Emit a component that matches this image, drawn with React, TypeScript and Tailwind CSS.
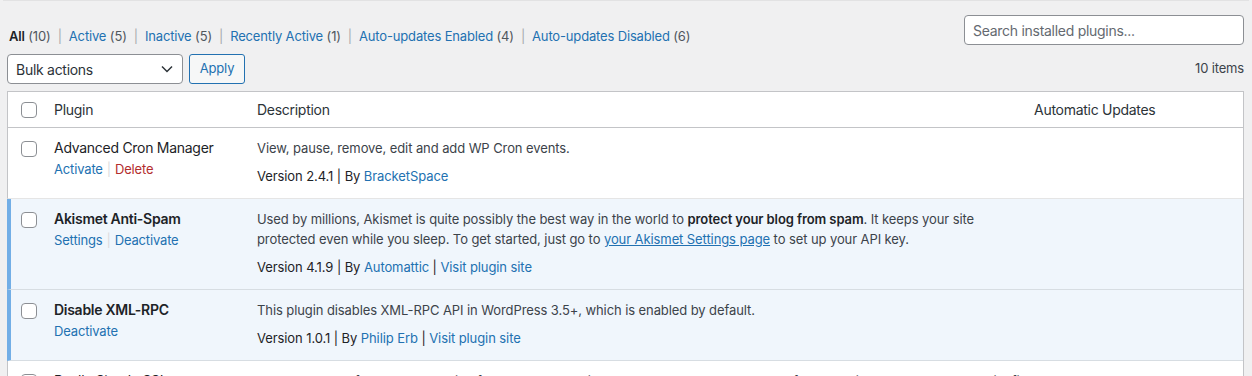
import React from "react";

const FONT = { fontFamily: "Inter, 'Noto Sans', sans-serif" };

function Checkbox() {
  return <div className="w-4 h-4 rounded-[4px] border border-[#8c8f94] bg-white" />;
}

function Sep() {
  return <span className="text-[#a7aaad] mx-[7px]">|</span>;
}

type Row = {
  name: string;
  active: boolean;
  actions: { label: string; color: string }[];
  desc: React.ReactNode;
  version: string;
  author: string;
  site: boolean;
};

const rows: Row[] = [
  {
    name: "Advanced Cron Manager",
    active: false,
    actions: [
      { label: "Activate", color: "text-[#2271b1]" },
      { label: "Delete", color: "text-[#b32d2e]" },
    ],
    desc: <>View, pause, remove, edit and add WP Cron events.</>,
    version: "2.4.1",
    author: "BracketSpace",
    site: false,
  },
  {
    name: "Akismet Anti-Spam",
    active: true,
    actions: [
      { label: "Settings", color: "text-[#2271b1]" },
      { label: "Deactivate", color: "text-[#2271b1]" },
    ],
    desc: (
      <>
        Used by millions, Akismet is quite possibly the best way in the world to{" "}
        <strong className="font-semibold text-[#1d2327]">protect your blog from spam</strong>. It keeps your site
        <br />
        protected even while you sleep. To get started, just go to{" "}
        <span className="text-[#2271b1] underline">your Akismet Settings page</span> to set up your API key.
      </>
    ),
    version: "4.1.9",
    author: "Automattic",
    site: true,
  },
  {
    name: "Disable XML-RPC",
    active: true,
    actions: [{ label: "Deactivate", color: "text-[#2271b1]" }],
    desc: <>This plugin disables XML-RPC API in WordPress 3.5+, which is enabled by default.</>,
    version: "1.0.1",
    author: "Philip Erb",
    site: true,
  },
  {
    name: "Really Simple SSL",
    active: false,
    actions: [
      { label: "Activate", color: "text-[#2271b1]" },
      { label: "Delete", color: "text-[#b32d2e]" },
    ],
    desc: (
      <>
        <strong className="font-semibold">!!ATTENTION!!</strong> If you are upgrading from an older version, please read the changelog before updating and back up your site first.
      </>
    ),
    version: "3.2.1",
    author: "Really Simple Plugins",
    site: true,
  },
];

function PluginRow({ r }: { r: Row }) {
  return (
    <div
      className={`flex border-b border-black/10 ${
        r.active ? "bg-[#f0f6fc] border-l-4 border-l-[#72aee6]" : "bg-white border-l border-l-[#c3c4c7]"
      }`}
    >
      <div className={`shrink-0 pt-[13px] ${r.active ? "w-[33px] pl-[10px]" : "w-[36px] pl-[13px]"}`}>
        <Checkbox />
      </div>
      <div className="w-[203px] shrink-0 pl-[10px] pt-[10px]">
        <div
          className={`text-[14px] tracking-[-0.02em] leading-[20px] text-[#1d2327] mb-px ${
            r.active ? "font-semibold" : "font-normal"
          }`}
        >
          {r.name}
        </div>
        <div className="text-[13px] leading-[20px]">
          {r.actions.map((a, i) => (
            <React.Fragment key={a.label}>
              {i > 0 && <span className="text-[#dcdcde] mx-[4px]">|</span>}
              <span className={a.color}>{a.label}</span>
            </React.Fragment>
          ))}
        </div>
      </div>
      <div className="flex-1 pl-[10px] pr-[10px] pt-[10px] pb-[12px] text-[13px] tracking-[-0.007em] text-[#3c434a]">
        <p className="leading-[20px] mb-[8px] whitespace-nowrap">{r.desc}</p>
        <div className="leading-[20px] text-[#1d2327]">
          Version {r.version} | By <span className="text-[#2271b1]">{r.author}</span>
          {r.site && (
            <>
              {" "}| <span className="text-[#2271b1]">Visit plugin site</span>
            </>
          )}
        </div>
      </div>
      <div className="w-[219px] shrink-0" />
    </div>
  );
}

export default function App() {
  const filters = [
    { label: "Active", count: 5 },
    { label: "Inactive", count: 5 },
    { label: "Recently Active", count: 1 },
    { label: "Auto-updates Enabled", count: 4 },
    { label: "Auto-updates Disabled", count: 6 },
  ];
  return (
    <div className="w-[1252px] h-[376px] overflow-hidden bg-[#f0f0f1] tracking-[-0.01em]" style={FONT}>
      <div className="h-px mx-[3px] bg-[#e2e2e3]" />
      <div className="pl-[7px] pr-[8px]">
        <div className="flex justify-between items-start">
          <div className="mt-[25px] text-[13px] leading-[20px] text-[#50575e] pl-[2px]">
            <span className="font-semibold text-[#1d2327]">All</span> (10)
            {filters.map((f) => (
              <React.Fragment key={f.label}>
                <Sep />
                <span className="text-[#2271b1]">{f.label}</span> ({f.count})
              </React.Fragment>
            ))}
          </div>
          <div className="mt-[14px] w-[280px] h-[30px] rounded-[4px] border border-[#8c8f94] bg-white flex items-center pl-[8px] text-[14px] tracking-[-0.02em] text-[#646970]">
            Search installed plugins...
          </div>
        </div>
        <div className="mt-[8px] h-[30px] flex items-center">
          <div className="w-[176px] h-[30px] rounded-[4px] border border-[#8c8f94] bg-white flex items-center justify-between pl-[8px] pr-[9px] text-[14px] tracking-[-0.02em] text-[#2c3338]">
            <span>Bulk actions</span>
            <svg width="12" height="8" viewBox="0 0 12 8" fill="none">
              <path d="M1 1.5L6 6.5L11 1.5" stroke="#2c3338" strokeWidth="1.5" />
            </svg>
          </div>
          <div className="ml-[6px] w-[56px] h-[30px] rounded-[3px] border border-[#2271b1] bg-[#f6f7f7] flex items-center justify-center text-[13px] text-[#2271b1]">
            Apply
          </div>
          <div className="ml-auto text-[13px] text-[#3c434a]">10 items</div>
        </div>
        <div className="mt-[7px] border-t border-r border-[#c3c4c7] bg-white">
          <div className="flex h-[36px] border-b border-b-[#c3c4c7] border-l border-l-[#c3c4c7] text-[14px] tracking-[-0.02em] text-[#2c3338]">
            <div className="w-[36px] shrink-0 pl-[13px] flex items-center">
              <Checkbox />
            </div>
            <div className="w-[203px] shrink-0 pl-[10px] flex items-center">Plugin</div>
            <div className="flex-1 pl-[10px] flex items-center">Description</div>
            <div className="w-[219px] shrink-0 pl-[10px] flex items-center">Automatic Updates</div>
          </div>
          {rows.map((r) => (
            <PluginRow key={r.name} r={r} />
          ))}
        </div>
      </div>
    </div>
  );
}
